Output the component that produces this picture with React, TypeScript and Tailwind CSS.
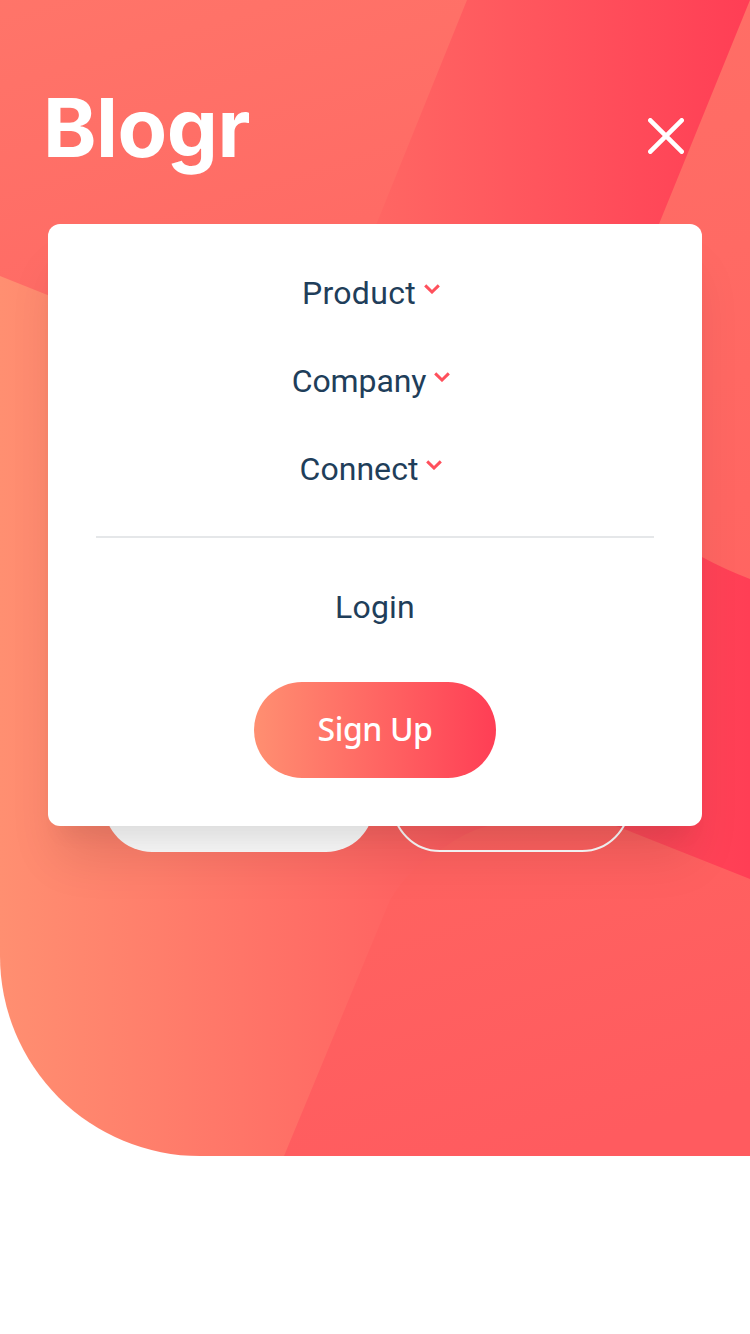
import React from "react";

function HeroPattern() {
  return (
    <svg className="absolute inset-0 h-full w-full" viewBox="0 0 750 1156" fill="none" aria-hidden="true">
      <defs>
        <linearGradient id="left" gradientUnits="userSpaceOnUse" x1="0" y1="-160" x2="140" y2="290">
          <stop stopColor="#ff796b" />
          <stop offset="1" stopColor="#ff6b65" />
        </linearGradient>
        <linearGradient id="right" gradientUnits="userSpaceOnUse" x1="700" y1="0" x2="850" y2="600">
          <stop stopColor="#ff6e66" />
          <stop offset="1" stopColor="#ff6461" />
        </linearGradient>
        <linearGradient id="bottom" gradientUnits="userSpaceOnUse" x1="450" y1="830" x2="560" y2="1156">
          <stop stopColor="#ff6360" />
          <stop offset="1" stopColor="#ff5b5f" />
        </linearGradient>
      </defs>
      <path d="M0 0H467L370 240Q310 390 160 340L0 276Z" fill="url(#left)" />
      <path d="M750 0L620 320Q570 500 702 557Q724 569 750 579Z" fill="url(#right)" />
      <path d="M284 1156L390 900Q410 866 445 847Q465 832 488 826Q550 800 624 829L750 879V1156Z" fill="url(#bottom)" />
    </svg>
  );
}

function Chevron() {
  return (
    <svg className="mb-2 h-[10px] w-4" viewBox="0 0 16 10" fill="none" stroke="#ff505c" strokeWidth="3">
      <path d="M1.2 1.4L8 8L14.8 1.4" />
    </svg>
  );
}

const items = [
  { label: "Product", className: "tracking-[0.3px]" },
  { label: "Company", className: "tracking-[-0.1px]" },
  { label: "Connect", className: "tracking-[0.05px]" },
];

function Menu() {
  return (
    <nav className="absolute top-[224px] right-12 left-12 flex h-[602px] flex-col items-center rounded-xl bg-white px-12 pt-[47px] pb-12 font-['Roboto',sans-serif] text-[32px] leading-[44px] text-[#1f3e5a] shadow-[0_40px_50px_-10px_rgba(0,0,0,0.1),0_20px_20px_-10px_rgba(0,0,0,0.04)]">
      <ul className="flex flex-col gap-11 pr-[8px]">
        {items.map((item) => (
          <li key={item.label} className={`flex items-center justify-center gap-2 ${item.className}`}>
            <span>{item.label}</span>
            <Chevron />
          </li>
        ))}
      </ul>
      <div className="mt-[45px] h-0.5 w-full shrink-0 bg-[#e5e7e9]" />
      <a className="mt-[47px] tracking-[0.2px]">Login</a>
      <a className="mt-[53px] flex h-24 w-[242px] items-center justify-center rounded-full bg-linear-to-r/srgb from-[#ff8f71] to-[#ff3e55] pb-0.5 font-['Noto_Sans',sans-serif] font-medium tracking-[-0.4px] text-white">
        Sign Up
      </a>
    </nav>
  );
}

export default function App() {
  return (
    <main className="min-h-[1334px] w-[750px] bg-white">
      <section className="relative flex h-[1156px] flex-col overflow-hidden rounded-bl-[200px] bg-linear-to-r/srgb from-[#ff8f71] to-[#ff3e55]">
        <HeroPattern />
        <header className="relative flex h-[224px] items-start justify-between pr-[66px] pl-[43px]">
          <h1 className="mt-[79px] font-['Inter',sans-serif] text-[81px] leading-[98px] font-bold tracking-[-0.5px] text-white">Blogr</h1>
          <button aria-label="Close menu" className="mt-[118px]">
            <svg className="h-9 w-9" viewBox="0 0 36 36" fill="none" stroke="white" strokeWidth="4.6" strokeLinecap="round">
              <path d="M2.3 2.3L33.7 33.7M33.7 2.3L2.3 33.7" />
            </svg>
          </button>
        </header>
        <div className="relative mt-[532px] flex h-24 gap-[18px] pl-[104px]">
          <div className="w-[270px] rounded-full bg-white" />
          <div className="w-[238px] rounded-full border-2 border-white" />
        </div>
        <Menu />
      </section>
    </main>
  );
}
